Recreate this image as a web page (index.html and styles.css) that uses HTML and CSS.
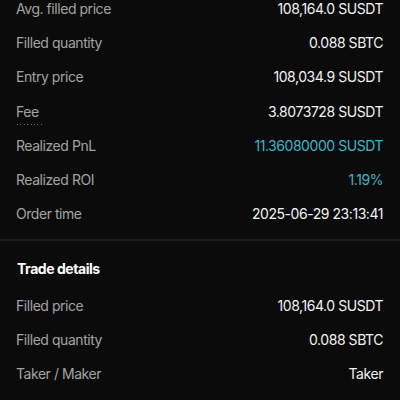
FILE: index.html
```html
<!DOCTYPE html>
<html lang="en">
<head>
<meta charset="UTF-8" />
<meta name="viewport" content="width=device-width, initial-scale=1.0" />
<title>Order details</title>
<link rel="stylesheet" href="styles.css">
</head>
<body>

<!-- ===== ORDER SUMMARY ===== -->
<section class="block summary">
  <div class="row"><span class="label">Avg. filled price</span><span class="val">108,164.0 SUSDT</span></div>
  <div class="row"><span class="label">Filled quantity</span><span class="val">0.088 SBTC</span></div>
  <div class="row"><span class="label">Entry price</span><span class="val">108,034.9 SUSDT</span></div>
  <div class="row"><span class="label hint">Fee</span><span class="val">3.8073728 SUSDT</span></div>
  <div class="row"><span class="label">Realized PnL</span><span class="val up">11.36080000 SUSDT</span></div>
  <div class="row"><span class="label">Realized ROI</span><span class="val up">1.19%</span></div>
  <div class="row"><span class="label">Order time</span><span class="val">2025-06-29 23:13:41</span></div>
</section>

<div class="divider"></div>

<!-- ===== TRADE DETAILS ===== -->
<section class="block">
  <h2 class="block-title">Trade details</h2>
  <div class="row"><span class="label">Filled price</span><span class="val">108,164.0 SUSDT</span></div>
  <div class="row"><span class="label">Filled quantity</span><span class="val">0.088 SBTC</span></div>
  <div class="row"><span class="label">Taker / Maker</span><span class="val">Taker</span></div>
</section>

</body>
</html>
```

FILE: styles.css
```css
:root{
  --bg:#0b0b0b;
  --label:#a3a3a3;
  --text:#f2f2f2;
  --up:#3fb4c9;
  --line:#1c1c1c;
}
body{
  margin:0;
  background:var(--bg);
  color:var(--text);
  font-family:Inter,"Noto Sans",sans-serif;
  font-size:14px;
  letter-spacing:-.45px;
  overflow:hidden;
}

.block{padding:0 17px 0 16px;}
.summary{margin-top:-9px;padding-bottom:8px;}

.row{
  display:flex;justify-content:space-between;align-items:center;
  height:34.3px;
}
.label{color:var(--label);}
.val{color:var(--text);}
.val.up{color:var(--up);}

/* dotted hint underline (Fee) */
.hint{position:relative;}
.hint::after{
  content:"";position:absolute;left:1px;bottom:-5px;
  width:27px;height:1px;
  background:repeating-linear-gradient(to right,#6a6a6a 0 1px,transparent 1px 3.4px);
}

.divider{height:2px;background:var(--line);}

.block-title{
  margin:0;padding:18px 0 10px 1px;
  font-size:14px;font-weight:700;line-height:19px;
  color:#fff;
}
```
